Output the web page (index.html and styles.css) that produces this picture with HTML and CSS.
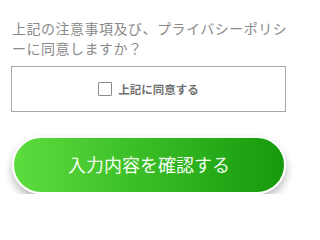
FILE: index.html
```html
<!DOCTYPE html>
<html lang="ja">
<head>
<meta charset="utf-8">
<link rel="stylesheet" href="styles.css">
</head>
<body>
<div class="wrap">
  <p class="note">上記の注意事項及び、プライバシーポリシ<br>ーに同意しますか？</p>
  <label class="agree">
    <span class="check"></span>
    <span class="agree-text">上記に同意する</span>
  </label>
  <button class="submit" type="button">入力内容を確認する</button>
</div>
</body>
</html>
```
FILE: styles.css
```css
html, body {
  margin: 0;
  padding: 0;
  background: #ffffff;
}
body {
  font-family: "Noto Sans CJK JP", "Noto Sans", sans-serif;
}
.wrap {
  width: 274px;
  margin-left: 12px;
  padding-top: 18px;
  display: flex;
  flex-direction: column;
}
.note {
  margin: 0;
  font-size: 14px;
  line-height: 20px;
  letter-spacing: 0.5px;
  white-space: nowrap;
  color: #8a8a8a;
}
.agree {
  margin-top: 8px;
  margin-left: -1px;
  height: 44px;
  border: 1px solid #a8a8a8;
  display: flex;
  align-items: center;
  justify-content: center;
  gap: 6px;
  padding-left: 0;
}
.check {
  width: 12px;
  height: 12px;
  border: 1px solid #8c8c8c;
  border-radius: 1px;
  background: #fff;
}
.agree-text {
  font-size: 11.5px;
  font-weight: bold;
  color: #707070;
  line-height: 14px;
}
.submit {
  margin-top: 24px;
  height: 58px;
  width: 274px;
  border: 2px solid #ffffff;
  border-radius: 29px;
  background: linear-gradient(to right, #5ddc3e, #149a0c);
  box-shadow: 0 5px 8px rgba(0, 0, 0, 0.28);
  color: #f2fff0;
  font-family: "Noto Sans CJK JP", "Noto Sans", sans-serif;
  font-size: 18px;
  padding: 0;
  padding-bottom: 2px;
}
```
